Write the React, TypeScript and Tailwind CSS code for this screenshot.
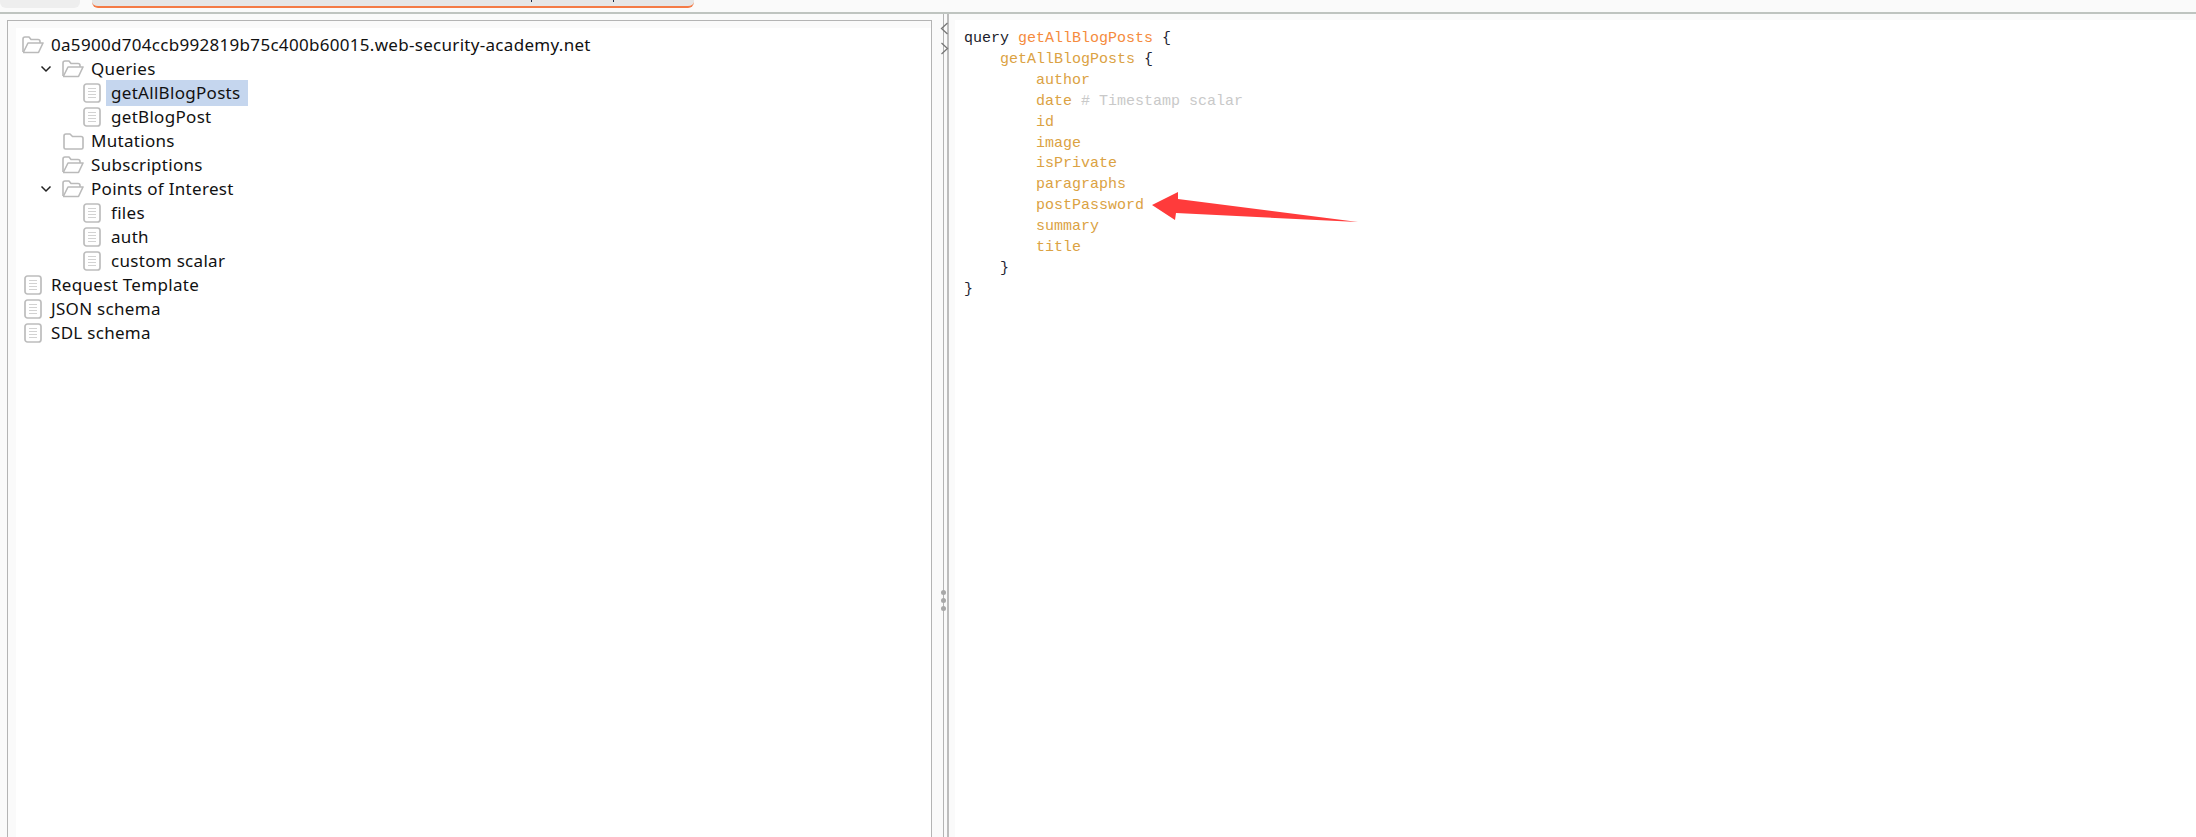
const CODE = [
  { indent: "pl-0", parts: [["query ", "text-[#1c1c2b]"], ["getAllBlogPosts", "text-[#f58b3d]"], [" {", "text-[#1f2433]"]] },
  { indent: "pl-[36px]", parts: [["getAllBlogPosts", "text-[#dba243]"], [" {", "text-[#1f2433]"]] },
  { indent: "pl-[72px]", parts: [["author", "text-[#dba243]"]] },
  { indent: "pl-[72px]", parts: [["date", "text-[#dba243]"], [" # Timestamp scalar", "text-[#c9c9c9]"]] },
  { indent: "pl-[72px]", parts: [["id", "text-[#dba243]"]] },
  { indent: "pl-[72px]", parts: [["image", "text-[#dba243]"]] },
  { indent: "pl-[72px]", parts: [["isPrivate", "text-[#dba243]"]] },
  { indent: "pl-[72px]", parts: [["paragraphs", "text-[#dba243]"]] },
  { indent: "pl-[72px]", parts: [["postPassword", "text-[#dba243]"]] },
  { indent: "pl-[72px]", parts: [["summary", "text-[#dba243]"]] },
  { indent: "pl-[72px]", parts: [["title", "text-[#dba243]"]] },
  { indent: "pl-[36px]", parts: [["}", "text-[#1f2433]"]] },
  { indent: "pl-0", parts: [["}", "text-[#1f2433]"]] },
];

type IconKind = "open" | "closed" | "doc";

function TreeIcon({ kind }: { kind: IconKind }) {
  return (
    <span className="flex h-6 w-[22px] flex-none items-center justify-center">
      {kind === "open" && (
        <svg width="22" height="18" viewBox="0 0 22 18" fill="none" stroke="#bababa" strokeWidth="1.6" strokeLinejoin="round">
          <path d="M1 16V3q0-2 2-2h4l2 2.5h7q2 0 2 2V7" />
          <path d="M1 16.5h15.5L21 7H6L1.5 16" />
        </svg>
      )}
      {kind === "closed" && (
        <svg width="21" height="17" viewBox="0 0 21 17" fill="none" stroke="#bababa" strokeWidth="1.6" strokeLinejoin="round">
          <path d="M1 14.5V3q0-2 2-2h4l2.5 2.5H18q2 0 2 2v9q0 1.500-1.500 1.500h-16Q1 16 1 14.500z" />
        </svg>
      )}
      {kind === "doc" && (
        <svg width="18" height="20" viewBox="0 0 18 20" fill="none" stroke="#bdbdbd">
          <rect x="1" y="1" width="16" height="18" rx="2.500" strokeWidth="1.700" />
          <path d="M5 5.500h8M5 8.500h8M5 11.500h8M5 14.500h8" strokeWidth="1.200" stroke="#d2d2d2" />
        </svg>
      )}
    </span>
  );
}

function Chevron() {
  return (
    <svg width="12" height="8" viewBox="0 0 12 8" fill="none" stroke="#222" strokeWidth="1.500">
      <path d="M1.500 1.500 6 6l4.500-4.500" />
    </svg>
  );
}

function RootRow({ kind, label }: { kind: IconKind; label: string }) {
  return (
    <div className="flex h-6 items-center pl-[6px]">
      <TreeIcon kind={kind} />
      <span className="ml-[3px] px-1">{label}</span>
    </div>
  );
}

function GroupRow({ kind, label, open }: { kind: IconKind; label: string; open?: boolean }) {
  return (
    <div className="flex h-6 items-center pl-6">
      <span className="flex w-3 flex-none items-center justify-center">{open && <Chevron />}</span>
      <span className="w-[10px] flex-none" />
      <TreeIcon kind={kind} />
      <span className="ml-[3px] px-1">{label}</span>
    </div>
  );
}

function LeafRow({ label, selected }: { label: string; selected?: boolean }) {
  return (
    <div className="flex h-6 items-center pl-[65px]">
      <TreeIcon kind="doc" />
      <span className={selected ? "ml-[3px] bg-[#c5d6ee] pr-2 pl-[5px]" : "ml-[3px] px-[5px]"}>{label}</span>
    </div>
  );
}

export default function App() {
  return (
    <div className="relative flex h-[837px] w-full flex-col overflow-hidden bg-[#fafafa]">
      {/* clipped tab strip */}
      <div className="flex h-3 flex-none items-start gap-3 pl-0">
        <div className="h-2 w-20 rounded-b-md bg-[#eeeeee]" />
        <div className="relative h-2 w-[602px] rounded-b-md border-b-2 border-[#f47a45] bg-[#e6e6e6]">
          <span className="absolute top-0 left-[439px] h-0.5 w-px bg-[#1a2a44]" />
          <span className="absolute top-0 left-[521px] h-0.5 w-px bg-[#1a2a44]" />
        </div>
      </div>
      <div className="h-0.5 flex-none bg-[#bfc4c0]" />

      <div className="flex min-h-0 flex-1">
        {/* tree */}
        <div className="mt-1.5 ml-[7px] flex w-[925px] flex-none flex-col border-x border-t border-[#b4b4b4] pt-[7px] pl-2">
          <div className="flex-1 bg-white pt-[5px] font-['Noto_Sans',sans-serif] text-[17px] tracking-[0.3px] text-[#111]">
            <RootRow kind="open" label="0a5900d704ccb992819b75c400b60015.web-security-academy.net" />
            <GroupRow kind="open" label="Queries" open />
            <LeafRow label="getAllBlogPosts" selected />
            <LeafRow label="getBlogPost" />
            <GroupRow kind="closed" label="Mutations" />
            <GroupRow kind="open" label="Subscriptions" />
            <GroupRow kind="open" label="Points of Interest" open />
            <LeafRow label="files" />
            <LeafRow label="auth" />
            <LeafRow label="custom scalar" />
            <RootRow kind="doc" label="Request Template" />
            <RootRow kind="doc" label="JSON schema" />
            <RootRow kind="doc" label="SDL schema" />
          </div>
        </div>

        {/* splitter */}
        <div className="relative w-[15px] flex-none">
          <div className="absolute top-0 bottom-0 left-[11px] w-px bg-[#b4b4b4]" />
          <div className="absolute top-[576px] left-[9px] flex flex-col gap-[3px]">
            <span className="size-[5px] rounded-full bg-[#a8a8a8]" />
            <span className="size-[5px] rounded-full bg-[#a8a8a8]" />
            <span className="size-[5px] rounded-full bg-[#a8a8a8]" />
          </div>
          <svg className="absolute top-2 left-2" width="9" height="34" viewBox="0 0 9 34" fill="none" stroke="#777" strokeWidth="1.300">
            <path d="M7.500 1 1.500 6.500l6 5.500M1.500 21l6 5.500-6 5.500" />
          </svg>
        </div>

        {/* code */}
        <div className="min-w-0 flex-1 border-l-2 border-[#bdbdbd] pt-1.5 pl-[6px]">
          <div className="h-full bg-white pt-[9px] pl-[9px] font-['Liberation_Mono',monospace] text-[15px] leading-[20.9px] whitespace-pre">
            {CODE.map((line, i) => (
              <div key={i} className={line.indent}>
                {line.parts.map(([text, color]) => (
                  <span key={text} className={color}>{text}</span>
                ))}
              </div>
            ))}
          </div>
        </div>
      </div>

      {/* annotation arrow */}
      <svg className="absolute top-[185px] left-[1145px]" width="220" height="45" viewBox="1145 185 220 45">
        <polygon points="1152,205 1178,192 1178,199 1358,222 1176,213 1175,220" fill="#ff3b3b" />
      </svg>
    </div>
  );
}
